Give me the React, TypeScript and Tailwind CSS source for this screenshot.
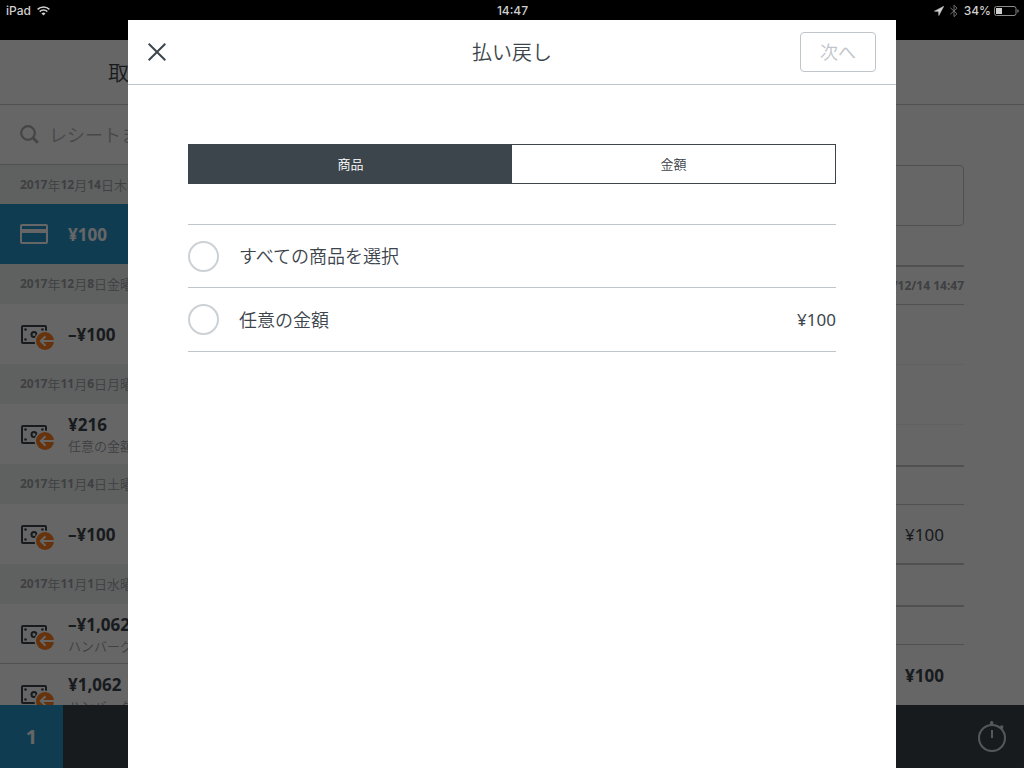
import React from "react";

const FONT = "font-['Noto_Sans','Noto_Sans_CJK_JP',sans-serif]";

type Entry = { kind: "card" | "refund"; amount: string; note?: string };
type Group = { date: string; entries: Entry[] };

const GROUPS: Group[] = [
  { date: "2017年12月14日木曜日", entries: [{ kind: "card", amount: "¥100" }] },
  { date: "2017年12月8日金曜日", entries: [{ kind: "refund", amount: "–¥100" }] },
  { date: "2017年11月6日月曜日", entries: [{ kind: "refund", amount: "¥216", note: "任意の金額" }] },
  { date: "2017年11月4日土曜日", entries: [{ kind: "refund", amount: "–¥100" }] },
  {
    date: "2017年11月1日水曜日",
    entries: [
      { kind: "refund", amount: "–¥1,062", note: "ハンバーグ" },
      { kind: "refund", amount: "¥1,062", note: "ハンバーグ" },
    ],
  },
];

function WifiIcon() {
  return (
    <svg width="13" height="10" viewBox="0 0 13 10" fill="none" stroke="#cfcfcf" strokeWidth="1.5">
      <path d="M0.6 3.4a8.4 8.4 0 0 1 11.8 0" />
      <path d="M2.7 5.6a5.4 5.4 0 0 1 7.6 0" />
      <path d="M6.5 9.6 4.5 7.5a2.9 2.9 0 0 1 4 0Z" fill="#cfcfcf" stroke="none" />
    </svg>
  );
}

function StatusBar() {
  return (
    <header className="grid h-5 shrink-0 grid-cols-3 items-center pt-0.5 pr-[5px] pl-1.5 font-['Inter',sans-serif] text-[12px] leading-4 font-medium text-[#cfcfcf]">
      <div className="flex items-center gap-1.5">
        <span>iPad</span>
        <WifiIcon />
      </div>
      <div className="text-center">14:47</div>
      <div className="flex items-center justify-end gap-[3px]">
        <svg width="10" height="10" viewBox="0 0 10 10" fill="#cfcfcf">
          <path d="M9.8 0.2 0.4 5.2l4.2.2.2 4.2Z" stroke="#cfcfcf" strokeWidth="0.5" />
        </svg>
        <svg className="ml-0.5" width="10" height="14" viewBox="0 0 10 14" fill="none" stroke="#707070" strokeWidth="1">
          <path d="M1.4 3.8 8 9.8 5 12.6V1.2L8 4.2 1.4 10.2" />
        </svg>
        <span className="ml-0.5">34%</span>
        <svg width="25" height="10" viewBox="0 0 25 10" fill="none">
          <rect x="0.5" y="0.5" width="21.5" height="9" rx="2" stroke="#8c8c8c" />
          <rect x="2" y="2" width="6" height="6" fill="#cfcfcf" />
          <path d="M23.4 3.2v3.6c.9-.3 1.3-1 1.3-1.8s-.4-1.5-1.3-1.8Z" fill="#8c8c8c" />
        </svg>
      </div>
    </header>
  );
}

function CardIcon() {
  return (
    <svg width="28" height="20" viewBox="0 0 28 20" fill="none" stroke="#fff" strokeWidth="2">
      <rect x="1" y="1" width="26" height="18" rx="1" />
      <path d="M1 7h26" strokeWidth="4" />
    </svg>
  );
}

function RefundIcon() {
  return (
    <svg width="34" height="32" viewBox="0 -6 34 32" fill="none">
      <rect x="2" y="2" width="24" height="17" rx="1" stroke="#3d454c" strokeWidth="2" />
      <g fill="#3d454c">
        <circle cx="5.5" cy="5.5" r="1.3" />
        <circle cx="22.5" cy="5.5" r="1.3" />
        <circle cx="5.5" cy="15.5" r="1.3" />
      </g>
      <circle cx="14" cy="10.5" r="2.5" stroke="#3d454c" strokeWidth="2" />
      <circle cx="25" cy="17" r="10.5" fill="#fff" />
      <circle cx="25" cy="17" r="9" fill="#ff7f22" />
      <path d="M34 17H21M25.5 12.3 20.8 17l4.7 4.7" stroke="#fff" strokeWidth="2" />
    </svg>
  );
}

function DateLabel({ text }: { text: string }) {
  return (
    <>
      {text.split(/(\d+)/).map((part, i) =>
        /^\d+$/.test(part) ? (
          <span key={i} className="text-[12px] font-bold">
            {part}
          </span>
        ) : (
          <span key={i}>{part}</span>
        ),
      )}
    </>
  );
}

function History() {
  return (
    <section className="flex w-[300px] shrink-0 flex-col bg-white">
      <h1 className="flex h-16 shrink-0 items-center justify-center text-[21px] leading-6 font-[350]">
        取引履歴
      </h1>
      <label className="flex h-[60px] shrink-0 items-center gap-2.5 border-t border-[#c3c7ca] px-5">
        <svg
          className="shrink-0"
          width="19"
          height="19"
          viewBox="0 0 19 19"
          fill="none"
          stroke="#a8adb0"
          strokeWidth="2.2"
        >
          <circle cx="8" cy="8" r="6.8" />
          <path d="m12.8 12.8 5 5" strokeWidth="3" />
        </svg>
        <input
          type="search"
          aria-label="レシートを検索"
          placeholder="レシートまたは商品"
          className="w-full min-w-0 bg-transparent text-[18px] leading-6 font-[350] outline-none placeholder:text-[#b0b4b7]"
        />
      </label>
      <div className="min-h-0 flex-1 overflow-hidden">
        {GROUPS.map((group, g) => (
          <div key={group.date}>
            <h2
              className={
                "flex h-10 items-center bg-[#eef1f1] px-5 text-[13px] leading-5 font-[350] text-[#9ca1a5] " +
                (g === 0 ? "border-t border-[#c3c7ca]" : "")
              }
            >
              <DateLabel text={group.date} />
            </h2>
            <ul className="divide-y divide-[#c3c7ca]">
              {group.entries.map((entry, i) => (
                <li
                  key={i}
                  className={
                    "flex h-15 items-center px-5 " + (entry.kind === "card" ? "bg-[#2996cc] text-white" : "")
                  }
                >
                  <div className="flex w-12 shrink-0 items-center">
                    {entry.kind === "card" ? <CardIcon /> : <RefundIcon />}
                  </div>
                  <div className="pt-0.5 whitespace-nowrap">
                    <div className="text-[17px] leading-[22px] font-bold">{entry.amount}</div>
                    {entry.note && (
                      <div className="text-[13px] leading-5 font-[350] text-[#9ca1a5]">{entry.note}</div>
                    )}
                  </div>
                </li>
              ))}
            </ul>
          </div>
        ))}
      </div>
    </section>
  );
}

function Detail() {
  return (
    <section className="flex min-w-0 flex-1 flex-col bg-white">
      <div className="h-[65px] shrink-0 border-b border-[#c3c7ca]" />
      <div className="px-15 pt-15">
        <div className="h-[61px] rounded-[4px] border border-[#c3c7ca]" />
        <div className="mt-[39px] flex h-10 items-center justify-end border-t-2 border-b border-[#c3c7ca] text-[12px] leading-5 font-bold text-[#9ca1a5]">
          2017/12/14 14:47
        </div>
        <div className="h-15 border-b border-[#f0f2f2]" />
        <div className="h-15 border-b border-[#f0f2f2]" />
        <div className="mt-10 h-10 border-t-2 border-b border-[#c3c7ca]" />
        <div className="flex h-15 items-center justify-end border-b-2 border-[#c3c7ca] pt-0.5 pr-5 text-[17px] leading-6">
          ¥100
        </div>
        <div className="mt-10 h-10 border-t-2 border-b border-[#c3c7ca]" />
        <div className="flex h-15 items-center justify-end pt-0.5 pr-5 text-[17px] leading-6 font-bold">
          ¥100
        </div>
      </div>
    </section>
  );
}

function Footer() {
  return (
    <footer className="flex h-[63px] shrink-0 items-center justify-between bg-[#3d454c] pr-4">
      <div className="flex h-full w-[63px] items-center justify-center bg-[#2996cc] text-[20px] leading-6 font-bold text-white">
        1
      </div>
      <svg width="32" height="33" viewBox="0 1 32 33" fill="none" stroke="#d8dadb" strokeWidth="2">
        <circle cx="16" cy="19" r="13" />
        <path d="M16 11v8" />
        <path d="M14 5.4V3.2l.8-1.2h1.6l.8 1.2v2.2Z" fill="#d8dadb" stroke="none" />
        <path d="m23.6 8 1-1.6h2.6v3l-1.4.8Z" fill="#d8dadb" stroke="none" />
      </svg>
    </footer>
  );
}

function RefundDialog() {
  return (
    <div role="dialog" aria-label="払い戻し" className="w-3/4 bg-white">
      <div className="grid h-[65px] grid-cols-[1fr_auto_1fr] items-center border-b border-[#c0c5ca] px-5">
        <button type="button" aria-label="閉じる" className="justify-self-start">
          <svg width="18" height="18" viewBox="0 0 18 18" fill="none" stroke="#3d454c" strokeWidth="2">
            <path d="m0.7 0.7 16.6 16.6M17.3 0.7 0.7 17.3" />
          </svg>
        </button>
        <h2 className="pt-0.5 text-[20px] leading-6 font-[350]">払い戻し</h2>
        <button
          type="button"
          disabled
          className="h-10 w-[76px] justify-self-end rounded-[4px] border border-[#c0c5ca] text-[18px] leading-6 font-[350] text-[#c0c5ca]"
        >
          次へ
        </button>
      </div>
      <div className="px-15 pt-[59px]">
        <div className="grid h-10 grid-cols-2 border border-[#3d454c] text-[13px] leading-5 font-[350]">
          <button type="button" className="bg-[#3d454c] text-white">
            商品
          </button>
          <button type="button">金額</button>
        </div>
        <div className="mt-10 divide-y divide-[#c0c5ca] border-y border-[#c0c5ca] text-[18px] leading-6 font-[350]">
          <label className="flex h-[63px] items-center gap-5">
            <input
              type="checkbox"
              className="size-[31px] shrink-0 appearance-none rounded-full border-2 border-[#ccd1d5]"
            />
            <span>すべての商品を選択</span>
          </label>
          <label className="flex h-[63px] items-center gap-5">
            <input
              type="checkbox"
              className="size-[31px] shrink-0 appearance-none rounded-full border-2 border-[#ccd1d5]"
            />
            <span>任意の金額</span>
            <span className="ml-auto text-[17px] font-normal">¥100</span>
          </label>
        </div>
      </div>
    </div>
  );
}

export default function App() {
  return (
    <div className={"flex h-screen flex-col overflow-hidden bg-black text-[#3d454c] " + FONT}>
      <StatusBar />
      <main className="relative flex min-h-0 flex-1 flex-col pt-5">
        <div className="flex min-h-0 flex-1 overflow-hidden">
          <History />
          <Detail />
        </div>
        <Footer />
        <div className="absolute inset-0 flex justify-center bg-black/60">
          <RefundDialog />
        </div>
      </main>
    </div>
  );
}
